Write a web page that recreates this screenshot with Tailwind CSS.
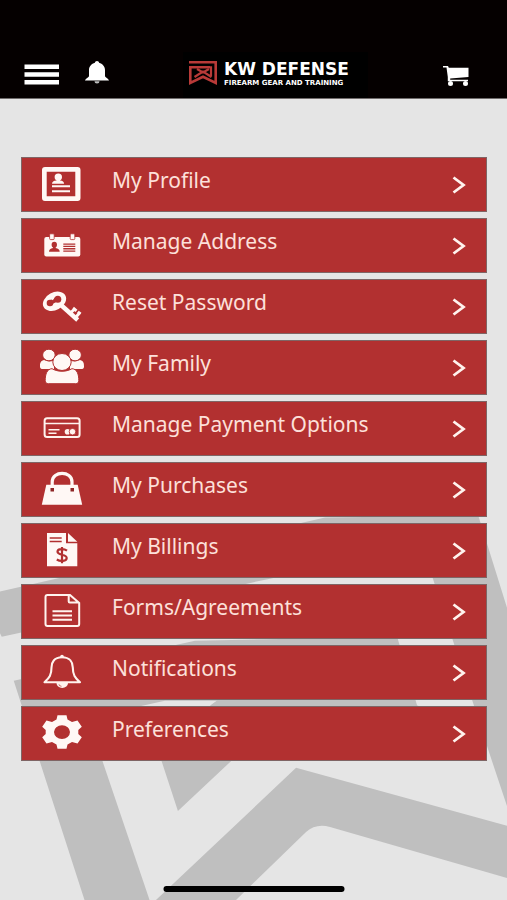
<!DOCTYPE html>
<html lang="en">
<head>
<meta charset="utf-8">
<meta name="viewport" content="width=device-width, initial-scale=1">
<title>KW Defense - My Account</title>
<script src="https://cdn.jsdelivr.net/npm/@tailwindcss/browser@4"></script>
</head>
<body class="relative min-h-screen overflow-x-hidden bg-[#e5e5e5] font-['Noto_Sans','Open_Sans',sans-serif]">

<!-- Emblem watermark -->
<svg class="absolute inset-0 -z-0 h-full w-full" viewBox="0 0 507 900" preserveAspectRatio="xMidYMin slice" fill="#bfbfbf" aria-hidden="true">
  <path d="M0 591 325 517 478 515 507 608V806L487 746 422 545 270 578 2 636 0 632Z"/>
  <path d="M14 680 195 640 397 636 417 705H210L217 700 165 700 88 717 150 900H85Z"/>
  <path d="M217 700H407L420 706 289 706 178 810 157 746Z"/>
  <path d="M296 767 507 825V877L330 826Q316 822 306 831L235 900H155Z"/>
</svg>

<header class="relative flex items-end justify-between border-b border-[#6f6b6b] bg-[#050000] pt-[52px] pr-[37px] pl-6">
  <div class="flex items-center gap-[25px] pb-2.5">
    <button type="button" aria-label="Menu">
      <svg class="block h-6 w-9" viewBox="0 0 36 24" fill="#fff"><path d="M0.500 2.500h34.500v4.500H.5zM.5 10.200h34.500v4.500H.5zM.5 18h34.500v4.500H.5z"/></svg>
    </button>
    <button type="button" aria-label="Alerts">
      <svg class="mb-1 block h-6 w-6" viewBox="0 0 24 24" fill="#fff"><path d="M12 1c1.200 0 1.900.8 2.100 1.700C17.500 3.700 20 6.500 20 10v6c0 1.500 3.500 2.500 4 4.500H0C.5 18.500 4 17.500 4 16v-6c0-3.500 2.500-6.300 5.900-7.300C10.100 1.800 10.800 1 12 1z"/><path d="M9.500 21.300h5a2.500 2.200 0 0 1-5 0z" fill="#bbb"/></svg>
    </button>
  </div>
  <a href="#home" class="flex h-[46px] w-[185px] items-center gap-[7px] bg-black pr-2.5 pb-1 pl-1.5 font-['DejaVu_Sans',sans-serif] font-bold text-white" aria-label="KW Defense home">
    <svg class="h-[26px] w-7 shrink-0" viewBox="0 0 28 26" fill="none" stroke="#b83a38" stroke-width="2.600" aria-hidden="true">
      <path d="M0 2.300H26.700V23L14 16.800 1.300 23V7.300H21"/>
      <path d="M22 6.300V16.500M5.500 17 14 11.500 22.500 17M8 9 14 12.500 20 9" stroke-width="2.200"/>
    </svg>
    <span class="flex flex-col whitespace-nowrap">
      <span class="text-[17px] leading-5">KW DEFENSE</span>
      <span class="text-[7px] leading-2">FIREARM GEAR AND TRAINING</span>
    </span>
  </a>
  <div class="flex pb-2.5">
    <button type="button" aria-label="Cart">
      <svg class="block h-6 w-7" viewBox="0 0 28 24" fill="#fff"><path d="M1 2h5l.8 1.700H26.500V13L8.200 14.500v1.200H26v1.500H5.800V13L4.500 3.500H1z"/><circle cx="8.500" cy="19.500" r="2.500"/><circle cx="23.500" cy="19.500" r="2.500"/></svg>
    </button>
  </div>
</header>

<main class="relative pt-[58px] pr-5 pb-[140px] pl-[21px]">
  <nav aria-label="Account">
    <ul class="flex flex-col gap-1.5 text-[21px] leading-7 text-[#fde0da]">
      <li><a href="#profile" class="flex h-[55px] items-center border border-[#7f6565] bg-[#b23030] pr-5 pl-[18px]">
        <svg class="mb-1 h-11 w-11 shrink-0" viewBox="0 0 44 44" fill="#fff8f5" aria-hidden="true"><path fill-rule="evenodd" d="M5 6H37.500a3 3 0 0 1 3 3V37a3 3 0 0 1-3 3H5a3 3 0 0 1-3-3V9a3 3 0 0 1 3-3zM6.700 10.700V35.300H35.300V10.700z"/><ellipse cx="18.300" cy="16" rx="3.700" ry="3.500"/><path d="M16.500 18h3.600v1.500c2.500.2 4 1.200 4 3.300H12c0-2.100 1.500-3.100 4.500-3.300zM12 24.200h18v2H12zM12 29.200h18v2H12z"/></svg>
        <span class="ml-7 flex-1 pb-2.5">My Profile</span>
        <svg class="h-[18px] w-[14px]" viewBox="0 0 14 18" fill="none" stroke="#fff3ee" stroke-width="2.800" aria-hidden="true"><path d="M1.500 1.500 11.500 9 1.500 16.500"/></svg>
      </a></li>
      <li><a href="#address" class="flex h-[55px] items-center border border-[#7f6565] bg-[#b23030] pr-5 pl-[18px]">
        <svg class="mb-1 h-11 w-11 shrink-0" viewBox="0 0 44 44" fill="#fff8f5" aria-hidden="true"><rect x="4.300" y="15" width="36" height="19.500" rx="2"/><g stroke="#b23030" stroke-width=".8"><rect x="9.600" y="11.800" width="4.600" height="5.800" rx="1"/><rect x="30.200" y="11.800" width="4.600" height="5.800" rx="1"/></g><g fill="#b23030"><ellipse cx="14.300" cy="22.800" rx="2.700" ry="3"/><path d="M13 25h2.600v1c2.500.5 4.100 1.500 4.100 3.700H9c0-2.200 1.500-3.200 4-3.700z"/><path d="M23.300 21.500h12v1.300h-12zM23.300 23.800h12v1.300h-12zM23.300 26.100h12v1.300h-12zM23.300 28.400h12v1.300h-12z"/></g></svg>
        <span class="ml-7 flex-1 pb-2.5">Manage Address</span>
        <svg class="h-[18px] w-[14px]" viewBox="0 0 14 18" fill="none" stroke="#fff3ee" stroke-width="2.800" aria-hidden="true"><path d="M1.500 1.500 11.500 9 1.500 16.500"/></svg>
      </a></li>
      <li><a href="#password" class="flex h-[55px] items-center border border-[#7f6565] bg-[#b23030] pr-5 pl-[18px]">
        <svg class="mb-1 h-11 w-11 shrink-0" viewBox="0 0 44 44" fill="none" stroke="#fff8f5" aria-hidden="true"><ellipse cx="14.500" cy="18.300" rx="12.300" ry="8.800" transform="rotate(-28 14.500 18.300)" fill="#fff8f5" stroke="none"/><path d="M10 19.800 17.800 15.800" stroke="#b23030" stroke-width="4.500" stroke-linecap="round"/><circle cx="10" cy="20" r="3.300" fill="#b23030" stroke="none"/><circle cx="17.800" cy="16.300" r="3.500" fill="#b23030" stroke="none"/><path d="M9.500 13.500l4 2.800" stroke-width="2.500"/><path stroke-width="4.400" d="M21 22 37.700 37"/><path stroke-width="3" d="M30.500 30 35 25.500M35.500 34.500 40 29.500M33 25l3.500 2.800M37.800 28.800l2.700 2.200"/></svg>
        <span class="ml-7 flex-1 pb-2.5">Reset Password</span>
        <svg class="h-[18px] w-[14px]" viewBox="0 0 14 18" fill="none" stroke="#fff3ee" stroke-width="2.800" aria-hidden="true"><path d="M1.500 1.500 11.500 9 1.500 16.500"/></svg>
      </a></li>
      <li><a href="#family" class="flex h-[55px] items-center border border-[#7f6565] bg-[#b23030] pr-5 pl-[18px]">
        <svg class="mb-1 h-11 w-11 shrink-0" viewBox="0 0 44 44" fill="#fff8f5" stroke="#b23030" stroke-width="1" aria-hidden="true"><path stroke="none" d="M4 16C0 17 0 20 0 22.500 0 24.500 1 25 3 25H14V16.500C10 18 7 17.500 4 16zM40 16c4 1 4 4 4 6.500 0 2-1 2.500-3 2.500H30V16.500c4 1.500 7 1 10-.5z"/><ellipse cx="8.900" cy="11" rx="6.300" ry="5.800"/><ellipse cx="35.100" cy="11" rx="6.300" ry="5.800"/><path d="M12 24.700c6 3.400 14 3.400 20 0 5 .3 6.800 5.300 6.800 12 0 2-1.300 3-3.300 3H8.500c-2 0-3.300-1-3.300-3 0-6.700 1.800-11.700 6.800-12z"/><ellipse cx="22" cy="18" rx="9.200" ry="8.500"/></svg>
        <span class="ml-7 flex-1 pb-2.5">My Family</span>
        <svg class="h-[18px] w-[14px]" viewBox="0 0 14 18" fill="none" stroke="#fff3ee" stroke-width="2.800" aria-hidden="true"><path d="M1.500 1.500 11.500 9 1.500 16.500"/></svg>
      </a></li>
      <li><a href="#payment" class="flex h-[55px] items-center border border-[#7f6565] bg-[#b23030] pr-5 pl-[18px]">
        <svg class="mb-1 h-11 w-11 shrink-0" viewBox="0 0 44 44" fill="none" stroke="#fff3ee" aria-hidden="true"><rect x="4.600" y="13.300" width="35" height="18.700" rx="2.500" stroke-width="2"/><path stroke-width="1.600" d="M4.600 18.500h35M8.500 24.700h11M8.500 28.200h8"/><circle cx="27.500" cy="26.700" r="2.800" fill="#fff3ee" stroke="none"/><circle cx="32.500" cy="26.700" r="3.300" fill="#fff3ee" stroke="#b23030" stroke-width=".9"/></svg>
        <span class="ml-7 flex-1 pb-2.5">Manage Payment Options</span>
        <svg class="h-[18px] w-[14px]" viewBox="0 0 14 18" fill="none" stroke="#fff3ee" stroke-width="2.800" aria-hidden="true"><path d="M1.500 1.500 11.500 9 1.500 16.500"/></svg>
      </a></li>
      <li><a href="#purchases" class="flex h-[55px] items-center border border-[#7f6565] bg-[#b23030] pr-5 pl-[18px]">
        <svg class="mb-1 h-11 w-11 shrink-0" viewBox="0 0 44 44" fill="#fff8f5" aria-hidden="true"><path d="M6.300 18.700H37.700L42.200 38.700H1.800z"/><path d="M12.200 23V16C12.200 4.500 32 4.500 32 16v7" fill="none" stroke="#fff8f5" stroke-width="3.200"/><path fill="#8e2626" d="M10.500 22h3.500v3.500h-3.500zM30.500 22H34v3.500h-3.500z"/></svg>
        <span class="ml-7 flex-1 pb-2.5">My Purchases</span>
        <svg class="h-[18px] w-[14px]" viewBox="0 0 14 18" fill="none" stroke="#fff3ee" stroke-width="2.800" aria-hidden="true"><path d="M1.500 1.500 11.500 9 1.500 16.500"/></svg>
      </a></li>
      <li><a href="#billings" class="flex h-[55px] items-center border border-[#7f6565] bg-[#b23030] pr-5 pl-[18px]">
        <svg class="mb-1 h-11 w-11 shrink-0" viewBox="0 0 44 44" fill="#fff8f5" aria-hidden="true"><path d="M7 6H26V16.300H37.300V39.300H7z"/><path d="M28 6 37.300 14.700H28z"/><path fill="#b23030" d="M9.700 10.300h12v1.500h-12zM9.700 13.700h12v1.500h-12z"/><path fill="none" stroke="#b23030" stroke-width="2.200" d="M27 23.700C24 21.500 17.500 21.500 17.500 24.800 17.500 28.500 26.700 27 26.700 31 26.700 34.500 20 34.500 16.800 32.500M22 20V36.300"/></svg>
        <span class="ml-7 flex-1 pb-2.5">My Billings</span>
        <svg class="h-[18px] w-[14px]" viewBox="0 0 14 18" fill="none" stroke="#fff3ee" stroke-width="2.800" aria-hidden="true"><path d="M1.500 1.500 11.500 9 1.500 16.500"/></svg>
      </a></li>
      <li><a href="#forms" class="flex h-[55px] items-center border border-[#7f6565] bg-[#b23030] pr-5 pl-[18px]">
        <svg class="mb-1 h-11 w-11 shrink-0" viewBox="0 0 44 44" fill="none" stroke="#fff3ee" stroke-width="2" aria-hidden="true"><path d="M7.500 6.900H30L39.200 15V36a2 2 0 0 1-2 2H7.500a2 2 0 0 1-2-2V8.900a2 2 0 0 1 2-2zM28.700 7.500V13.500a1 1 0 0 0 1 1H38.500M12.500 23.200H32M12.500 27.500H32M12.500 31.700H32"/></svg>
        <span class="ml-7 flex-1 pb-2.5">Forms/Agreements</span>
        <svg class="h-[18px] w-[14px]" viewBox="0 0 14 18" fill="none" stroke="#fff3ee" stroke-width="2.800" aria-hidden="true"><path d="M1.500 1.500 11.500 9 1.500 16.500"/></svg>
      </a></li>
      <li><a href="#notifications" class="flex h-[55px] items-center border border-[#7f6565] bg-[#b23030] pr-5 pl-[18px]">
        <svg class="mb-1 h-11 w-11 shrink-0" viewBox="0 0 44 44" fill="none" stroke="#fff3ee" stroke-width="2.100" stroke-linejoin="round" aria-hidden="true"><path d="M22 8.300C14 8.300 11.500 13.500 11.500 18.500 11.500 26 9.500 28.500 4.500 33.300H40C35 28.500 32.800 26 32.800 18.500 32.800 13.500 30 8.300 22 8.300z"/><circle cx="22" cy="7.500" r="1.800" fill="#fff3ee" stroke="none"/><path d="M16.500 34H28a5.700 5 0 0 1-11.500 0z" fill="#fff3ee" stroke="none"/><path d="M19 35.300a3 2 0 0 0 2.500 2" stroke="#b23030" stroke-width=".7"/></svg>
        <span class="ml-7 flex-1 pb-2.5">Notifications</span>
        <svg class="h-[18px] w-[14px]" viewBox="0 0 14 18" fill="none" stroke="#fff3ee" stroke-width="2.800" aria-hidden="true"><path d="M1.500 1.500 11.500 9 1.500 16.500"/></svg>
      </a></li>
      <li><a href="#preferences" class="flex h-[55px] items-center border border-[#7f6565] bg-[#b23030] pr-5 pl-[18px]">
        <svg class="mb-1 h-11 w-11 shrink-0" viewBox="0 0 44 44" fill="#fff8f5" aria-hidden="true"><path fill-rule="evenodd" d="M17.500 5.300h9l1 4.300 4.500 2.400 5.500-1.500 4.300 6.300-3.500 3.200v4l3.500 3.200-4.300 6.300-5.500-1.500-4.500 2.400-1 4.300h-9l-1-4.300-4.500-2.400-5.500 1.500-4.300-6.300L5.700 24v-4l-3.500-3.200 4.300-6.300L12 12l4.500-2.400zM22 15.300a8 6.800 0 1 0 0 13.600 8 6.800 0 0 0 0-13.600z"/></svg>
        <span class="ml-7 flex-1 pb-2.5">Preferences</span>
        <svg class="h-[18px] w-[14px]" viewBox="0 0 14 18" fill="none" stroke="#fff3ee" stroke-width="2.800" aria-hidden="true"><path d="M1.500 1.500 11.500 9 1.500 16.500"/></svg>
      </a></li>
    </ul>
  </nav>
</main>

<div class="absolute bottom-[9px] left-1/2 h-1.5 w-[181px] -translate-x-1/2 rounded-full bg-black"></div>
</body>
</html>
